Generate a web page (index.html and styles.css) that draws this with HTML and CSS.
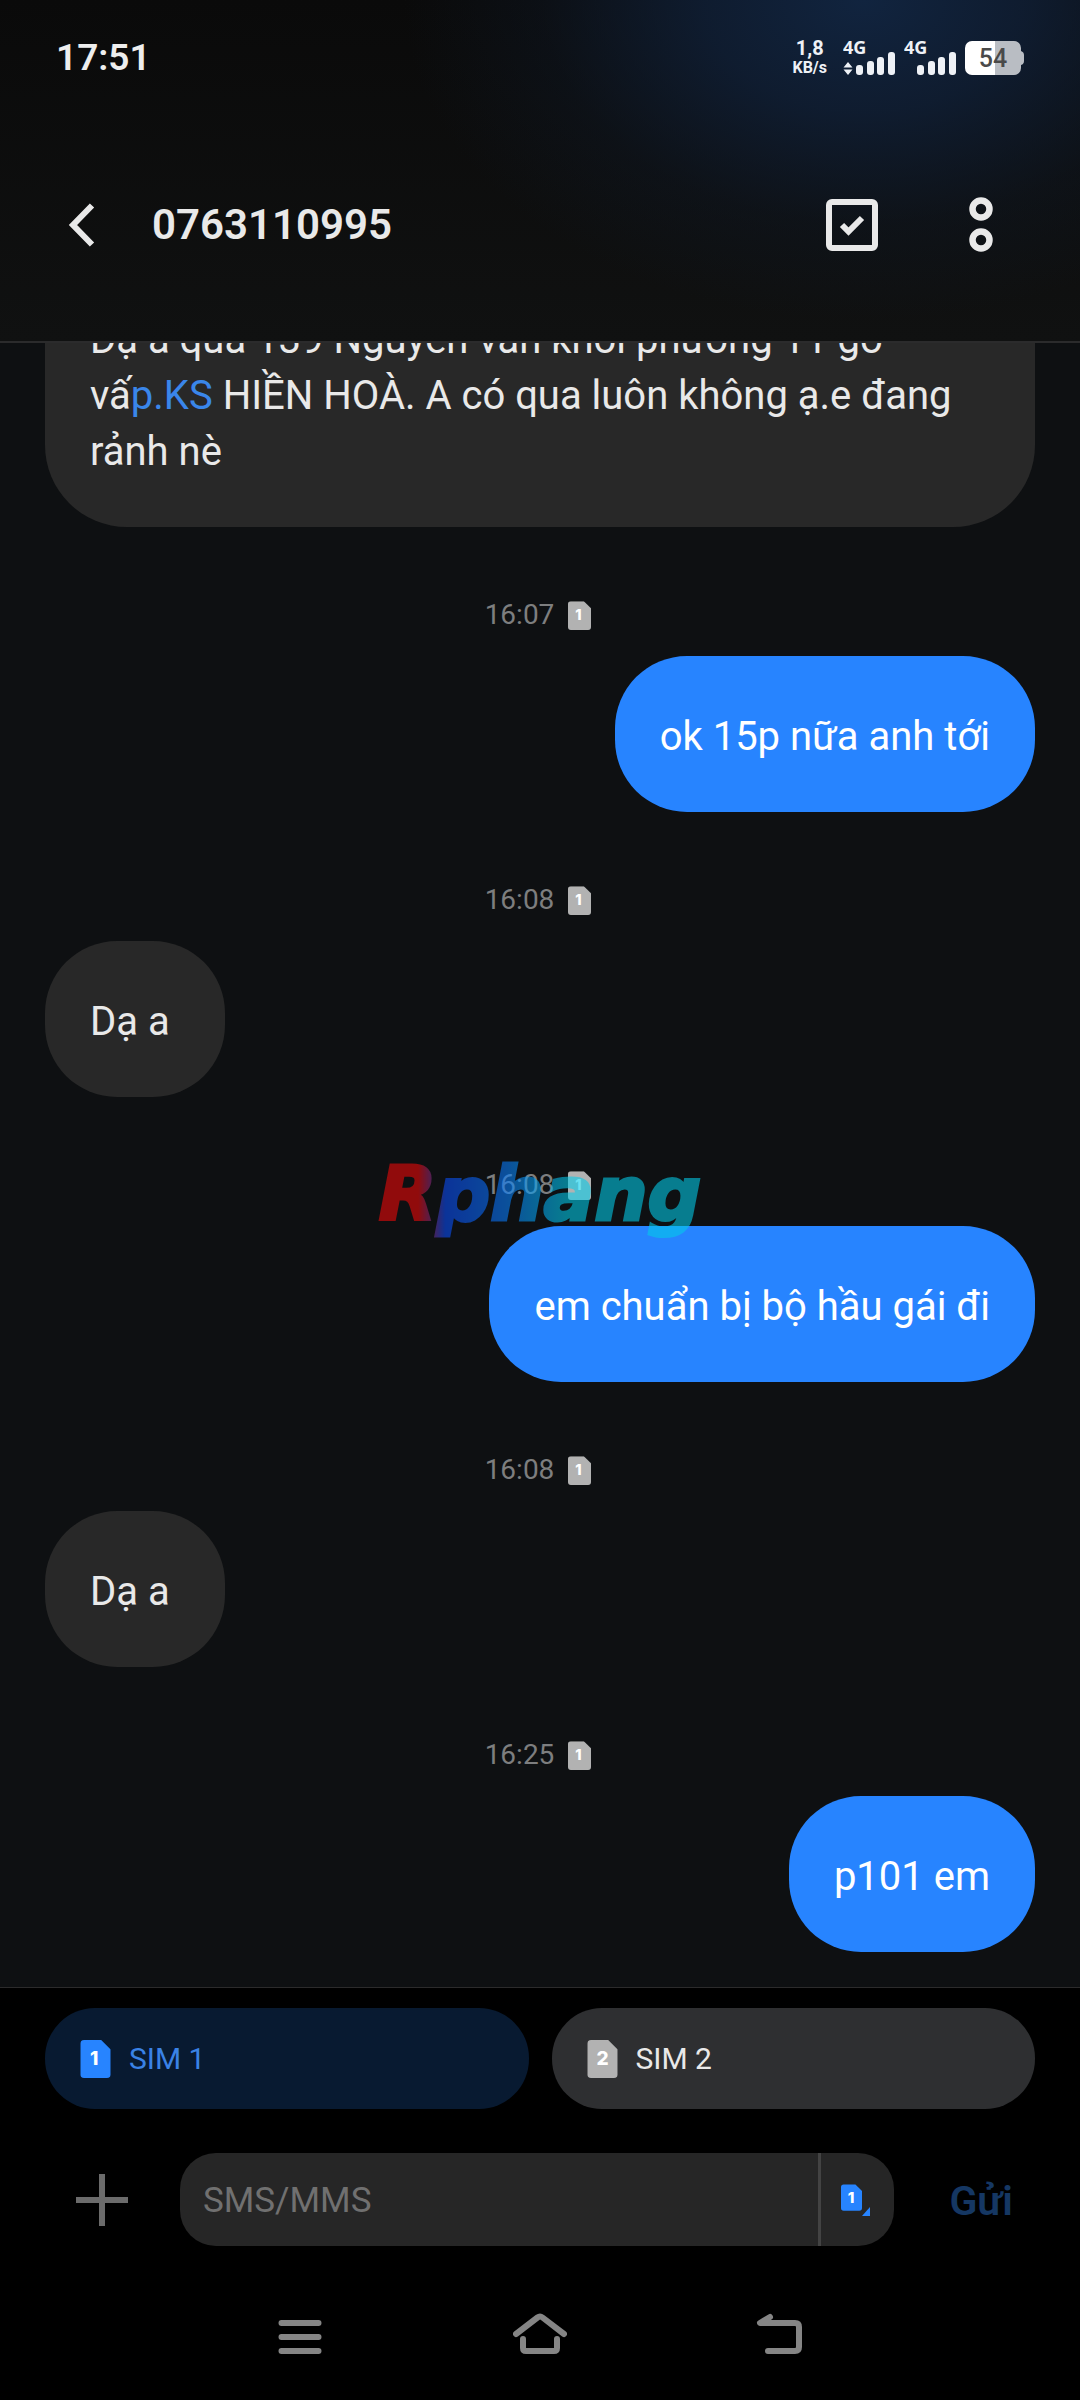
FILE: index.html
```html
<!DOCTYPE html>
<html lang="vi">
<head>
<meta charset="utf-8">
<meta name="viewport" content="width=device-width, initial-scale=1">
<title>0763110995</title>
<link rel="stylesheet" href="styles.css">
</head>
<body>
<svg class="defs" aria-hidden="true">
  <symbol id="sim" viewBox="0 0 24 30">
    <path d="M3 0H16.500L24 7.500V27a3 3 0 0 1-3 3H3a3 3 0 0 1-3-3V3a3 3 0 0 1 3-3z"/>
  </symbol>
</svg>
<div class="app">
  <header class="top">
    <div class="status">
      <time class="clock">17:51</time>
      <div class="status-icons">
        <div class="rate"><span class="rate-value">1,8</span><span class="rate-unit">KB/s</span></div>
        <svg class="signal" width="54" height="42" viewBox="0 0 54 42" role="img" aria-label="4G">
          <text x="0" y="17">4G</text>
          <path d="M5 25l4.500 5.500H.5zM5 38l4.500-5.500H.5z"/>
          <rect x="13" y="28" width="7" height="10" rx="3"/>
          <rect x="24" y="24" width="7" height="14" rx="3"/>
          <rect x="34" y="20" width="7" height="18" rx="3"/>
          <rect x="45" y="15" width="7" height="23" rx="3"/>
        </svg>
        <svg class="signal" width="54" height="42" viewBox="0 0 54 42" role="img" aria-label="4G">
          <text x="0" y="17">4G</text>
          <rect x="13" y="28" width="7" height="10" rx="3"/>
          <rect x="24" y="24" width="7" height="14" rx="3"/>
          <rect x="34" y="20" width="7" height="18" rx="3"/>
          <rect x="45" y="15" width="7" height="23" rx="3"/>
        </svg>
        <svg class="battery" width="60" height="34" viewBox="0 0 60 34" role="img" aria-label="54%">
          <path fill="#b9bdc3" d="M30 0H49a7 7 0 0 1 7 7v3q3 1 3 4v6q0 3-3 4v3a7 7 0 0 1-7 7H30z"/>
          <path fill="#fff" d="M7 0H30V34H7a7 7 0 0 1-7-7V7a7 7 0 0 1 7-7z"/>
          <text x="28" y="26" text-anchor="middle">54</text>
        </svg>
      </div>
    </div>
    <div class="bar">
      <button class="icon-btn" type="button" aria-label="Back">
        <svg width="30" height="48" viewBox="0 0 30 48"><path d="M25 4.500L6 24l19 19.500" fill="none" stroke="#e9e9e9" stroke-width="6" stroke-linejoin="miter"/></svg>
      </button>
      <h1 class="title">0763110995</h1>
      <div class="actions">
        <button class="icon-btn" type="button" aria-label="Select">
          <svg width="52" height="52" viewBox="0 0 52 52" fill="none" stroke="#e9e9e9"><rect x="3" y="3" width="46" height="46" rx="3" stroke-width="6"/><path d="M16 26l6.500 6.500L36 19" stroke-width="6" stroke-linejoin="miter"/></svg>
        </button>
        <button class="icon-btn" type="button" aria-label="More">
          <svg width="24" height="56" viewBox="0 0 24 56" fill="none" stroke="#e9e9e9" stroke-width="6.500"><circle cx="12" cy="12" r="8.500"/><circle cx="12" cy="43" r="8.500"/></svg>
        </button>
      </div>
    </div>
  </header>

  <main class="thread">
    <p class="bubble in long">Dạ a qua 139 Nguyễn văn khối phường 11 gò vấ<a href="#">p.KS</a> HIỀN HOÀ. A có qua luôn không ạ.e đang rảnh nè</p>
    <div class="stamp"><time>16:07</time><svg class="sim-s" viewBox="0 0 24 30"><use href="#sim"/><text x="11" y="20">1</text></svg></div>
    <p class="bubble out">ok 15p nữa anh tới</p>
    <div class="stamp"><time>16:08</time><svg class="sim-s" viewBox="0 0 24 30"><use href="#sim"/><text x="11" y="20">1</text></svg></div>
    <p class="bubble in">Dạ a</p>
    <div class="stamp"><time>16:08</time><svg class="sim-s" viewBox="0 0 24 30"><use href="#sim"/><text x="11" y="20">1</text></svg></div>
    <p class="bubble out">em chuẩn bị bộ hầu gái đi</p>
    <div class="stamp"><time>16:08</time><svg class="sim-s" viewBox="0 0 24 30"><use href="#sim"/><text x="11" y="20">1</text></svg></div>
    <p class="bubble in">Dạ a</p>
    <div class="stamp"><time>16:25</time><svg class="sim-s" viewBox="0 0 24 30"><use href="#sim"/><text x="11" y="20">1</text></svg></div>
    <p class="bubble out">p101 em</p>
  </main>

  <footer class="bottom">
    <div class="sims">
      <button class="sim active" type="button" aria-pressed="true"><svg class="sim-l" viewBox="0 0 24 30"><use href="#sim"/><text x="11" y="20">1</text></svg>SIM 1</button>
      <button class="sim" type="button" aria-pressed="false"><svg class="sim-l" viewBox="0 0 24 30"><use href="#sim"/><text x="12" y="20">2</text></svg>SIM 2</button>
    </div>
    <form class="compose">
      <button class="add" type="button" aria-label="Add">
        <svg width="52" height="52" viewBox="0 0 52 52" stroke="#6b6b6b" stroke-width="6" stroke-linecap="butt"><path d="M26 0v52M0 26h52"/></svg>
      </button>
      <div class="field">
        <input class="text" type="text" placeholder="SMS/MMS" aria-label="SMS/MMS">
        <button class="pick" type="button" aria-label="SIM 1">
          <svg width="30" height="32" viewBox="0 0 30 32"><use href="#sim" x="0" y="0" width="21" height="27"/><text x="10" y="19">1</text><path d="M29 23v9h-8z"/></svg>
        </button>
      </div>
      <button class="send" type="submit">Gửi</button>
    </form>
    <nav class="nav">
      <button class="icon-btn" type="button" aria-label="Recent"><svg width="54" height="44" viewBox="0 0 54 44"><path d="M8.500 11h37M8.500 25h37M8.500 39h37"/></svg></button>
      <button class="icon-btn" type="button" aria-label="Home"><svg width="54" height="44" viewBox="0 0 54 44"><path d="M3 22L24.500 5.500q2.500-2 5 0L51 22M10 27v9q0 3 3 3h28q3 0 3-3v-9"/></svg></button>
      <button class="icon-btn" type="button" aria-label="Back"><svg width="54" height="44" viewBox="0 0 54 44"><path d="M17 5L7 11H42q4 0 4 4V35q0 4-4 4H15"/></svg></button>
    </nav>
  </footer>
  <div class="watermark">Rphang</div>
</div>
</body>
</html>
```
FILE: styles.css
```css
* { box-sizing: border-box; }

body {
  margin: 0;
  background: #000;
  color: #e9e9e9;
  font-family: Roboto, "Noto Sans", sans-serif;
}

button, input {
  margin: 0;
  padding: 0;
  border: 0;
  background: none;
  color: inherit;
  font: inherit;
}

svg { display: block; flex: none; }
.defs { position: absolute; width: 0; height: 0; }

.app {
  position: relative;
  display: flex;
  flex-direction: column;
  height: 100vh;
}

/* Header */
.top {
  flex: none;
  border-bottom: 2px solid #2b2b2c;
  background:
    radial-gradient(ellipse 460px 320px at 80% 0, #11243f 0%, rgba(16, 32, 56, .8) 35%, rgba(15, 26, 42, .35) 70%, rgba(14, 20, 28, 0) 100%),
    linear-gradient(#0a0a0a, #101111);
}

.status {
  display: flex;
  align-items: center;
  justify-content: space-between;
  height: 116px;
  padding: 0 55px 0 56px;
}

.clock { font-size: 37px; font-weight: 600; line-height: 44px; color: #eee; }
.status-icons { display: flex; align-items: center; color: #eef1f6; }

.rate {
  display: flex;
  flex-direction: column;
  align-items: center;
  margin-right: 16px;
  font-weight: 700;
  line-height: 20px;
}
.rate-value { font-size: 20px; }
.rate-unit { font-size: 16px; }

.signal { margin-right: 7px; fill: #eef1f6; }
.signal text { font: 700 18px "Noto Sans", sans-serif; }
.battery text { fill: #4a4a4a; font-size: 25px; font-weight: 500; }

.bar {
  display: flex;
  align-items: center;
  height: 225px;
  padding: 0 87px 8px 67px;
}
.icon-btn { display: flex; }
.title {
  flex: 1;
  margin: 0 0 0 55px;
  font-size: 42px;
  font-weight: 600;
  line-height: 48px;
}
.actions { display: flex; align-items: center; gap: 91px; }

/* Conversation */
.thread {
  flex: 1;
  min-height: 0;
  display: flex;
  flex-direction: column;
  justify-content: flex-end;
  align-items: flex-start;
  overflow: hidden;
  padding: 0 45px 35px;
  background: #0e1012;
}

.bubble {
  flex: none;
  min-width: 180px;
  max-width: 100%;
  margin: 0;
  padding: 53px 45px 47px;
  border-radius: 72px;
  font-size: 40px;
  line-height: 56px;
}
.bubble.long { border-radius: 82px; }
.in { background: #282828; color: #e9e9e9; }
.out { align-self: flex-end; background: #2784ff; color: #fff; }
.bubble a { color: #3a86ea; text-decoration: none; }

.stamp {
  flex: none;
  display: flex;
  align-items: center;
  align-self: center;
  gap: 14px;
  padding: 72px 4px 25px 0;
  color: #7d7e7f;
  font-size: 28px;
  line-height: 32px;
}

.sim-s { width: 23px; height: 29px; fill: #b2b2b2; }
.sim-l { width: 31px; height: 38px; fill: #b2b2b2; }
.sim-s text, .sim-l text, .pick text {
  fill: #fff;
  font: 800 15px Inter, sans-serif;
  text-anchor: middle;
}

/* Composer */
.bottom {
  flex: none;
  border-top: 1px solid #2b2b2c;
  background: #000;
}

.sims {
  display: grid;
  grid-template-columns: 1fr 1fr;
  gap: 23px;
  padding: 20px 45px 0;
}
.sim {
  display: flex;
  align-items: center;
  gap: 18px;
  height: 101px;
  padding: 0 35px;
  border-radius: 50px;
  background: #2e2f31;
  font-size: 30px;
}
.sim.active { background: #081a31; color: #3a82e6; }
.active .sim-l, .pick svg { fill: #2784ff; }

.compose {
  display: flex;
  align-items: center;
  padding: 44px 67px 0 76px;
}
.add { display: flex; margin-right: 52px; }
.field {
  flex: 1;
  min-width: 0;
  display: flex;
  height: 93px;
  overflow: hidden;
  border-radius: 36px;
  background: #262626;
}
.text {
  flex: 1;
  min-width: 0;
  padding: 2px 23px 0;
  font-size: 35px;
}
.text::placeholder { color: #707070; opacity: 1; }
.pick {
  display: flex;
  align-items: center;
  width: 76px;
  padding-left: 20px;
  border-left: 3px solid #434343;
}
.send {
  margin-left: 55px;
  padding-top: 3px;
  color: #153763;
  font-size: 41px;
  font-weight: 600;
}

.nav {
  display: flex;
  justify-content: center;
  gap: 186px;
  padding: 66px 0 44px;
}
.nav path {
  fill: none;
  stroke: #858585;
  stroke-width: 6;
  stroke-linecap: round;
  stroke-linejoin: round;
}

/* Mark laid over the middle of the conversation */
.watermark {
  position: absolute;
  top: 50%;
  left: 50%;
  transform: translate(-50%, -50%);
  padding: 0 8px 12px;
  background: linear-gradient(90deg, #f00908 0%, #f00908 14%, #094dfa 22%, #097eff 40%, #03ccea 58%, #03ccea 100%);
  background-clip: text;
  -webkit-background-clip: text;
  -webkit-text-stroke: 3px transparent;
  color: transparent;
  font: italic 700 75px "DejaVu Sans", sans-serif;
  opacity: .58;
  pointer-events: none;
}
```
